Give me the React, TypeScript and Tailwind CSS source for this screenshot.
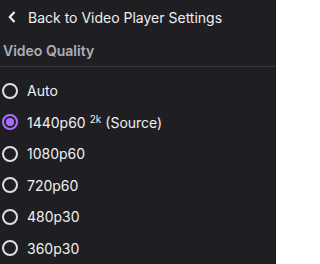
const qualities = [
  { label: "Auto" },
  { label: "1440p60", badge: "2k", suffix: "(Source)", checked: true },
  { label: "1080p60" },
  { label: "720p60" },
  { label: "480p30" },
  { label: "360p30" },
];

function Radio({ checked }: { checked?: boolean }) {
  return (
    <span
      className={`flex h-[16px] w-[16px] shrink-0 items-center justify-center rounded-full border-2 ${
        checked ? "border-[#a970ff]" : "border-[#dedee3]"
      }`}
    >
      {checked && <span className="h-[8px] w-[8px] rounded-full bg-[#a970ff]" />}
    </span>
  );
}

export default function App() {
  return (
    <div
      className="h-[264px] w-[276px] overflow-hidden bg-[#1f1f23] text-[#efeff1]"
      style={{ fontFamily: "Inter, 'Noto Sans', sans-serif" }}
    >
      <button className="flex h-[34px] w-full items-center pl-[8px] text-[14px]">
        <svg width="8" height="12" viewBox="0 0 8 12" className="mr-[12px]">
          <path d="M6.5 1 1.8 6 6.5 11" fill="none" stroke="#efeff1" strokeWidth="2.2" />
        </svg>
        Back to Video Player Settings
      </button>
      <div className="flex h-[32px] items-center px-[3px] text-[14px] font-semibold text-[#adadb8]">
        Video Quality
      </div>
      <div className="h-px bg-[#35353b]" />
      <div className="flex flex-col pt-[8px]">
        {qualities.map((q) => (
          <label key={q.label} className="flex h-[31.5px] items-center gap-[9px] pl-[2px] text-[14px]">
            <Radio checked={q.checked} />
            <span>
              {q.label}
              {q.badge && <sup className="ml-[4px] text-[10px]">{q.badge}</sup>}
              {q.suffix && <span className="ml-[4px]">{q.suffix}</span>}
            </span>
          </label>
        ))}
      </div>
    </div>
  );
}
